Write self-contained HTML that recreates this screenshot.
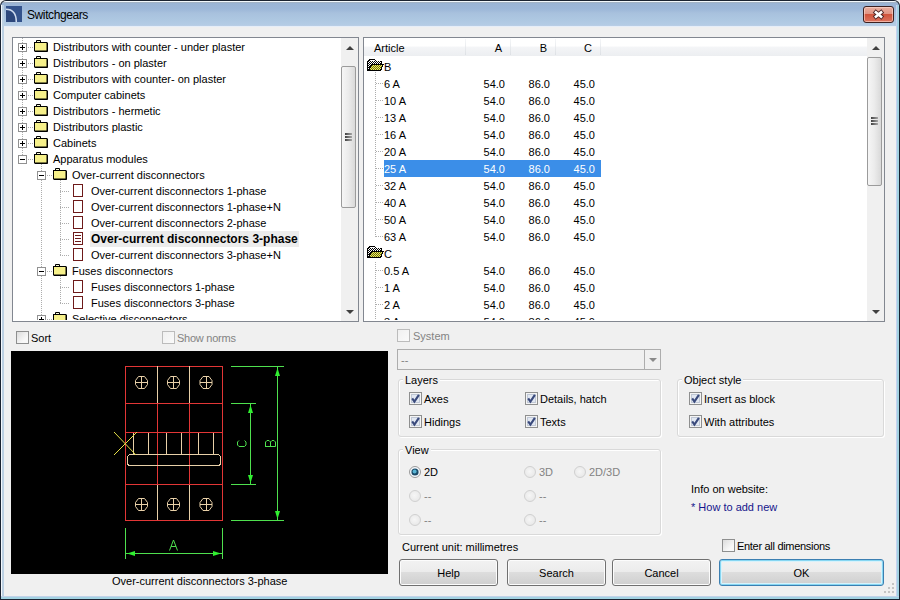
<!DOCTYPE html>
<html><head><meta charset="utf-8">
<style>
*{box-sizing:border-box}
html,body{margin:0;padding:0;width:900px;height:600px;overflow:hidden;background:#f0f0f0;font-family:"Liberation Sans",sans-serif;font-size:11px;color:#000}
.a{position:absolute}
.t{position:absolute;white-space:nowrap;line-height:16px}
/* window frame */
#outer{left:0;top:0;width:900px;height:600px;background:#1a2230;border-radius:6px 6px 0 0}
#frameL{left:1px;top:5px;width:3px;height:593px;background:linear-gradient(to right,#f4f8fc 0,#f4f8fc 1px,#bcd0e2 1px)}
#frameR{left:896px;top:5px;width:3px;height:593px;background:linear-gradient(to right,#c6d2f0 0,#c6d2f0 1px,#a2d2e2 1px)}
#frameB{left:1px;top:596px;width:898px;height:3px;background:linear-gradient(to bottom,#c2d2e8 0,#c2d2e8 1px,#a2d2e2 1px)}
#title{left:1px;top:1px;width:898px;height:26px;border-radius:5px 5px 0 0;
 background:linear-gradient(to bottom,#f2f8fc 0,#f2f8fc 1px,#a2b2c4 1px,#a2b2c4 2px,#9ab4d4 2px,#9cb7d8 8px,#a8c1dd 12px,#adc7e1 18px,#b4cce5 24px,#bccfe6 25px,#e6eef8 25px)}
#client{left:4px;top:27px;width:892px;height:569px;background:#f0f0f0}
#ttl{left:27px;top:7px;font-size:12px;letter-spacing:-0.4px;line-height:16px;color:#000}
#close{left:863px;top:6px;width:31px;height:17px;border:1px solid #3c2020;border-radius:3px;
 background:linear-gradient(to bottom,#eab0a0 0,#e09484 45%,#d0543c 50%,#dc7460 100%);box-shadow:inset 0 0 0 1px rgba(255,220,210,.6)}
/* boxes */
.box{position:absolute;background:#fff;border:1px solid #828790}
.sb{position:absolute;background:#f0f0f0;width:17px}
.thumb{position:absolute;left:0;width:15px;border:1px solid #9b9b9b;border-radius:2px;background:linear-gradient(to right,#f6f6f6,#ebebeb 50%,#d9d9d9)}
.grip{position:absolute;left:4px;width:7px;height:2px;background:linear-gradient(to right,#404040,#a8a8a8)}
.arr{position:absolute;width:0;height:0;border-left:4px solid transparent;border-right:4px solid transparent}
/* tree */
.exp{position:absolute;width:9px;height:9px;border:1px solid #919191;background:#fff}
.exp:before{content:"";position:absolute;left:1px;top:3px;width:5px;height:1px;background:#000}
.exp.p:after{content:"";position:absolute;left:3px;top:1px;width:1px;height:5px;background:#000}
.fold{position:absolute;width:14px;height:12px}
.doc{position:absolute;width:10px;height:13px;border:1px solid #6e1a1a;background:#fff}
.dv{position:absolute;width:1px;background:repeating-linear-gradient(to bottom,#adadad 0,#adadad 1px,transparent 1px,transparent 2px)}
.dh{position:absolute;height:1px;background:repeating-linear-gradient(to right,#adadad 0,#adadad 1px,transparent 1px,transparent 2px)}
/* controls */
.cb{position:absolute;width:13px;height:13px;border:1px solid #8e8f8f;background:linear-gradient(135deg,#dcdcdc,#f8f8f8 70%)}
.cb.dis{border-color:#bcbcbc;background:linear-gradient(135deg,#f0f0f0,#fafafa)}
.grp{position:absolute;border:1px solid #d9d9d9;border-radius:3px;box-shadow:inset 1px 1px 0 #fff,1px 1px 0 #fff}
.gl{position:absolute;background:#f0f0f0;padding:0 2px;line-height:14px;white-space:nowrap}
.btn{position:absolute;height:27px;border:1px solid #707070;border-radius:3px;
 background:linear-gradient(to bottom,#f2f2f2 0,#ebebeb 50%,#dddddd 50%,#cfcfcf 100%);box-shadow:inset 0 0 0 1px #fcfcfc;text-align:center;line-height:26px;font-size:11px}
.gray{color:#838383}
.rad{position:absolute;width:12px;height:12px;border-radius:50%;border:1px solid #d0d0d0;background:radial-gradient(circle at 45% 45%,#f6f6f6,#e4e4e4)}
</style></head><body>
<div id="outer" class="a"></div>
<div id="title" class="a"></div>
<div id="frameL" class="a"></div>
<div id="frameR" class="a"></div>
<div id="frameB" class="a"></div>
<div id="client" class="a"></div>
<svg class="a" style="left:6px;top:6px" width="16" height="16" viewBox="0 0 16 16">
<rect x="0" y="0" width="16" height="16" fill="#34538c"/>
<path d="M0 4 Q9.5 4 9.5 16 H0 Z" fill="#2c477c"/>
<path d="M0 3.2 Q10.3 3.2 10.3 16" stroke="#d0dcee" stroke-width="1.5" fill="none"/>
</svg>
<div id="ttl" class="t">Switchgears</div>
<div id="close" class="a"></div>
<svg class="a" style="left:871px;top:8px" width="16" height="13" viewBox="0 0 16 13">
<path d="M3.2 3 L11.8 10 M11.8 3 L3.2 10" stroke="#4e2626" stroke-width="4.4" stroke-linecap="butt"/>
<path d="M3.9 3.6 L11.1 9.4 M11.1 3.6 L3.9 9.4" stroke="#fff" stroke-width="2.6" stroke-linecap="butt"/>
</svg>
<div class="box" style="left:12px;top:37px;width:347px;height:285px"></div>
<div class="a" style="left:13px;top:38px;width:328px;height:282px;overflow:hidden">
<div class="dv" style="left:9px;top:0px;height:121px"></div>
<div class="dv" style="left:28px;top:126px;height:160px"></div>
<div class="dv" style="left:47px;top:142px;height:76px"></div>
<div class="dv" style="left:47px;top:238px;height:28px"></div>
<div class="dh" style="left:15px;top:9px;width:5px"></div>
<div class="exp p" style="left:5px;top:5px"></div>
<svg class="a" style="left:21px;top:2px" width="15" height="13" viewBox="0 0 15 13"><path d="M2.5 2.5 V0.5 H6.5 V2.5" fill="#f8f8d8" stroke="#000" stroke-width="1"/><rect x="0.5" y="2.5" width="12.5" height="8.5" fill="#f6f08a" stroke="#000" stroke-width="1"/><path d="M1 11.5 H13.5 V3" stroke="#000" stroke-width="1" fill="none"/></svg>
<div class="t" style="left:40px;top:1px">Distributors with counter - under plaster</div>
<div class="dh" style="left:15px;top:25px;width:5px"></div>
<div class="exp p" style="left:5px;top:21px"></div>
<svg class="a" style="left:21px;top:18px" width="15" height="13" viewBox="0 0 15 13"><path d="M2.5 2.5 V0.5 H6.5 V2.5" fill="#f8f8d8" stroke="#000" stroke-width="1"/><rect x="0.5" y="2.5" width="12.5" height="8.5" fill="#f6f08a" stroke="#000" stroke-width="1"/><path d="M1 11.5 H13.5 V3" stroke="#000" stroke-width="1" fill="none"/></svg>
<div class="t" style="left:40px;top:17px">Distributors - on plaster</div>
<div class="dh" style="left:15px;top:41px;width:5px"></div>
<div class="exp p" style="left:5px;top:37px"></div>
<svg class="a" style="left:21px;top:34px" width="15" height="13" viewBox="0 0 15 13"><path d="M2.5 2.5 V0.5 H6.5 V2.5" fill="#f8f8d8" stroke="#000" stroke-width="1"/><rect x="0.5" y="2.5" width="12.5" height="8.5" fill="#f6f08a" stroke="#000" stroke-width="1"/><path d="M1 11.5 H13.5 V3" stroke="#000" stroke-width="1" fill="none"/></svg>
<div class="t" style="left:40px;top:33px">Distributors with counter- on plaster</div>
<div class="dh" style="left:15px;top:57px;width:5px"></div>
<div class="exp p" style="left:5px;top:53px"></div>
<svg class="a" style="left:21px;top:50px" width="15" height="13" viewBox="0 0 15 13"><path d="M2.5 2.5 V0.5 H6.5 V2.5" fill="#f8f8d8" stroke="#000" stroke-width="1"/><rect x="0.5" y="2.5" width="12.5" height="8.5" fill="#f6f08a" stroke="#000" stroke-width="1"/><path d="M1 11.5 H13.5 V3" stroke="#000" stroke-width="1" fill="none"/></svg>
<div class="t" style="left:40px;top:49px">Computer cabinets</div>
<div class="dh" style="left:15px;top:73px;width:5px"></div>
<div class="exp p" style="left:5px;top:69px"></div>
<svg class="a" style="left:21px;top:66px" width="15" height="13" viewBox="0 0 15 13"><path d="M2.5 2.5 V0.5 H6.5 V2.5" fill="#f8f8d8" stroke="#000" stroke-width="1"/><rect x="0.5" y="2.5" width="12.5" height="8.5" fill="#f6f08a" stroke="#000" stroke-width="1"/><path d="M1 11.5 H13.5 V3" stroke="#000" stroke-width="1" fill="none"/></svg>
<div class="t" style="left:40px;top:65px">Distributors - hermetic</div>
<div class="dh" style="left:15px;top:89px;width:5px"></div>
<div class="exp p" style="left:5px;top:85px"></div>
<svg class="a" style="left:21px;top:82px" width="15" height="13" viewBox="0 0 15 13"><path d="M2.5 2.5 V0.5 H6.5 V2.5" fill="#f8f8d8" stroke="#000" stroke-width="1"/><rect x="0.5" y="2.5" width="12.5" height="8.5" fill="#f6f08a" stroke="#000" stroke-width="1"/><path d="M1 11.5 H13.5 V3" stroke="#000" stroke-width="1" fill="none"/></svg>
<div class="t" style="left:40px;top:81px">Distributors plastic</div>
<div class="dh" style="left:15px;top:105px;width:5px"></div>
<div class="exp p" style="left:5px;top:101px"></div>
<svg class="a" style="left:21px;top:98px" width="15" height="13" viewBox="0 0 15 13"><path d="M2.5 2.5 V0.5 H6.5 V2.5" fill="#f8f8d8" stroke="#000" stroke-width="1"/><rect x="0.5" y="2.5" width="12.5" height="8.5" fill="#f6f08a" stroke="#000" stroke-width="1"/><path d="M1 11.5 H13.5 V3" stroke="#000" stroke-width="1" fill="none"/></svg>
<div class="t" style="left:40px;top:97px">Cabinets</div>
<div class="dh" style="left:15px;top:121px;width:5px"></div>
<div class="exp" style="left:5px;top:117px"></div>
<svg class="a" style="left:21px;top:114px" width="15" height="13" viewBox="0 0 15 13"><path d="M2.5 2.5 V0.5 H6.5 V2.5" fill="#f8f8d8" stroke="#000" stroke-width="1"/><rect x="0.5" y="2.5" width="12.5" height="8.5" fill="#f6f08a" stroke="#000" stroke-width="1"/><path d="M1 11.5 H13.5 V3" stroke="#000" stroke-width="1" fill="none"/></svg>
<div class="t" style="left:40px;top:113px">Apparatus modules</div>
<div class="dh" style="left:34px;top:137px;width:5px"></div>
<div class="exp" style="left:24px;top:133px"></div>
<svg class="a" style="left:40px;top:130px" width="15" height="13" viewBox="0 0 15 13"><path d="M2.5 2.5 V0.5 H6.5 V2.5" fill="#f8f8d8" stroke="#000" stroke-width="1"/><rect x="0.5" y="2.5" width="12.5" height="8.5" fill="#f6f08a" stroke="#000" stroke-width="1"/><path d="M1 11.5 H13.5 V3" stroke="#000" stroke-width="1" fill="none"/></svg>
<div class="t" style="left:59px;top:129px">Over-current disconnectors</div>
<div class="dh" style="left:47px;top:153px;width:10px"></div>
<div class="doc" style="left:60px;top:146px"></div>
<div class="t" style="left:78px;top:145px">Over-current disconnectors 1-phase</div>
<div class="dh" style="left:47px;top:169px;width:10px"></div>
<div class="doc" style="left:60px;top:162px"></div>
<div class="t" style="left:78px;top:161px">Over-current disconnectors 1-phase+N</div>
<div class="dh" style="left:47px;top:185px;width:10px"></div>
<div class="doc" style="left:60px;top:178px"></div>
<div class="t" style="left:78px;top:177px">Over-current disconnectors 2-phase</div>
<div class="dh" style="left:47px;top:201px;width:10px"></div>
<div class="doc" style="left:60px;top:194px"></div>
<div class="a" style="left:62px;top:197px;width:6px;height:1px;background:#6e1a1a"></div>
<div class="a" style="left:62px;top:200px;width:6px;height:1px;background:#6e1a1a"></div>
<div class="a" style="left:62px;top:203px;width:6px;height:1px;background:#6e1a1a"></div>
<div class="a" style="left:77px;top:193px;width:209px;height:16px;background:#ececec"></div>
<div class="t" style="left:78px;top:193px;font-weight:bold;font-size:12px">Over-current disconnectors 3-phase</div>
<div class="dh" style="left:47px;top:217px;width:10px"></div>
<div class="doc" style="left:60px;top:210px"></div>
<div class="t" style="left:78px;top:209px">Over-current disconnectors 3-phase+N</div>
<div class="dh" style="left:34px;top:233px;width:5px"></div>
<div class="exp" style="left:24px;top:229px"></div>
<svg class="a" style="left:40px;top:226px" width="15" height="13" viewBox="0 0 15 13"><path d="M2.5 2.5 V0.5 H6.5 V2.5" fill="#f8f8d8" stroke="#000" stroke-width="1"/><rect x="0.5" y="2.5" width="12.5" height="8.5" fill="#f6f08a" stroke="#000" stroke-width="1"/><path d="M1 11.5 H13.5 V3" stroke="#000" stroke-width="1" fill="none"/></svg>
<div class="t" style="left:59px;top:225px">Fuses disconnectors</div>
<div class="dh" style="left:47px;top:249px;width:10px"></div>
<div class="doc" style="left:60px;top:242px"></div>
<div class="t" style="left:78px;top:241px">Fuses disconnectors 1-phase</div>
<div class="dh" style="left:47px;top:265px;width:10px"></div>
<div class="doc" style="left:60px;top:258px"></div>
<div class="t" style="left:78px;top:257px">Fuses disconnectors 3-phase</div>
<div class="dh" style="left:34px;top:281px;width:5px"></div>
<div class="exp p" style="left:24px;top:277px"></div>
<svg class="a" style="left:40px;top:274px" width="15" height="13" viewBox="0 0 15 13"><path d="M2.5 2.5 V0.5 H6.5 V2.5" fill="#f8f8d8" stroke="#000" stroke-width="1"/><rect x="0.5" y="2.5" width="12.5" height="8.5" fill="#f6f08a" stroke="#000" stroke-width="1"/><path d="M1 11.5 H13.5 V3" stroke="#000" stroke-width="1" fill="none"/></svg>
<div class="t" style="left:59px;top:273px">Selective disconnectors</div>
</div>
<div class="sb" style="left:341px;top:38px;height:283px"></div><div class="arr" style="left:346px;top:46px;border-bottom:4px solid #404040"></div><div class="arr" style="left:346px;top:310px;border-top:4px solid #404040"></div><div class="thumb" style="left:341px;top:66px;height:142px"></div><div class="grip" style="left:345px;top:133px"></div><div class="grip" style="left:345px;top:136px"></div><div class="grip" style="left:345px;top:139px"></div>
<svg width="0" height="0" style="position:absolute"><defs><pattern id="dgw" width="2" height="2" patternUnits="userSpaceOnUse"><rect width="2" height="2" fill="#000"/><rect width="1" height="1" fill="#fff"/><rect x="1" y="1" width="1" height="1" fill="#fff"/></pattern><pattern id="dgy" width="2" height="2" patternUnits="userSpaceOnUse"><rect width="2" height="2" fill="#6c6c10"/><rect width="1" height="1" fill="#f0f060"/><rect x="1" y="1" width="1" height="1" fill="#f0f060"/></pattern></defs></svg>
<div class="box" style="left:363px;top:37px;width:522px;height:285px"></div>
<div class="a" style="left:364px;top:38px;width:503px;height:282px;overflow:hidden">
<div class="a" style="left:0;top:0;width:503px;height:18px;background:linear-gradient(to bottom,#ffffff 0,#ffffff 45%,#f4f5f7 50%,#eceef1 100%)"></div>
<div class="a" style="left:101px;top:1px;width:1px;height:16px;background:linear-gradient(to bottom,#f5f6f8,#dde0e4)"></div>
<div class="a" style="left:146px;top:1px;width:1px;height:16px;background:linear-gradient(to bottom,#f5f6f8,#dde0e4)"></div>
<div class="a" style="left:191px;top:1px;width:1px;height:16px;background:linear-gradient(to bottom,#f5f6f8,#dde0e4)"></div>
<div class="a" style="left:236px;top:1px;width:1px;height:16px;background:linear-gradient(to bottom,#f5f6f8,#dde0e4)"></div>
<div class="t" style="left:10px;top:2px;line-height:17px">Article</div>
<div class="t" style="left:98px;top:2px;width:40px;text-align:right;line-height:17px">A</div>
<div class="t" style="left:143px;top:2px;width:40px;text-align:right;line-height:17px">B</div>
<div class="t" style="left:188px;top:2px;width:40px;text-align:right;line-height:17px">C</div>
<svg class="a" style="left:3px;top:21px" width="17" height="13" viewBox="0 0 17 13" shape-rendering="crispEdges"><path d="M0 12 V2 L2 0 H7 L9 2 H15 V5 H14 V3 H8 L6 1 H2.5 L1 2.5 V12 Z" fill="#000"/><rect x="1" y="2" width="13" height="9" fill="url(#dgw)"/><path d="M1 2.5 L2.5 1 H6 L8 3 H14 V2 H8.5 L6.5 0.5" fill="url(#dgw)"/><path d="M1 12 L4 5 H17 L14 12 Z" fill="#000"/><path d="M2.6 11 L5 6 H15.5 L13.2 11 Z" fill="url(#dgy)"/></svg>
<div class="t" style="left:20px;top:21px;line-height:17px">B</div>
<div class="dh" style="left:12px;top:45px;width:7px"></div>
<div class="t" style="left:20px;top:38px;line-height:17px;">6 A</div>
<div class="t" style="left:101px;top:38px;width:40px;text-align:right;line-height:17px;">54.0</div>
<div class="t" style="left:146px;top:38px;width:40px;text-align:right;line-height:17px;">86.0</div>
<div class="t" style="left:191px;top:38px;width:40px;text-align:right;line-height:17px;">45.0</div>
<div class="dh" style="left:12px;top:62px;width:7px"></div>
<div class="t" style="left:20px;top:55px;line-height:17px;">10 A</div>
<div class="t" style="left:101px;top:55px;width:40px;text-align:right;line-height:17px;">54.0</div>
<div class="t" style="left:146px;top:55px;width:40px;text-align:right;line-height:17px;">86.0</div>
<div class="t" style="left:191px;top:55px;width:40px;text-align:right;line-height:17px;">45.0</div>
<div class="dh" style="left:12px;top:79px;width:7px"></div>
<div class="t" style="left:20px;top:72px;line-height:17px;">13 A</div>
<div class="t" style="left:101px;top:72px;width:40px;text-align:right;line-height:17px;">54.0</div>
<div class="t" style="left:146px;top:72px;width:40px;text-align:right;line-height:17px;">86.0</div>
<div class="t" style="left:191px;top:72px;width:40px;text-align:right;line-height:17px;">45.0</div>
<div class="dh" style="left:12px;top:96px;width:7px"></div>
<div class="t" style="left:20px;top:89px;line-height:17px;">16 A</div>
<div class="t" style="left:101px;top:89px;width:40px;text-align:right;line-height:17px;">54.0</div>
<div class="t" style="left:146px;top:89px;width:40px;text-align:right;line-height:17px;">86.0</div>
<div class="t" style="left:191px;top:89px;width:40px;text-align:right;line-height:17px;">45.0</div>
<div class="dh" style="left:12px;top:113px;width:7px"></div>
<div class="t" style="left:20px;top:106px;line-height:17px;">20 A</div>
<div class="t" style="left:101px;top:106px;width:40px;text-align:right;line-height:17px;">54.0</div>
<div class="t" style="left:146px;top:106px;width:40px;text-align:right;line-height:17px;">86.0</div>
<div class="t" style="left:191px;top:106px;width:40px;text-align:right;line-height:17px;">45.0</div>
<div class="a" style="left:20px;top:122px;width:217px;height:17px;background:#3b8ee8"></div>
<div class="dh" style="left:12px;top:130px;width:7px"></div>
<div class="t" style="left:20px;top:123px;line-height:17px;color:#fff;">25 A</div>
<div class="t" style="left:101px;top:123px;width:40px;text-align:right;line-height:17px;color:#fff;">54.0</div>
<div class="t" style="left:146px;top:123px;width:40px;text-align:right;line-height:17px;color:#fff;">86.0</div>
<div class="t" style="left:191px;top:123px;width:40px;text-align:right;line-height:17px;color:#fff;">45.0</div>
<div class="dh" style="left:12px;top:147px;width:7px"></div>
<div class="t" style="left:20px;top:140px;line-height:17px;">32 A</div>
<div class="t" style="left:101px;top:140px;width:40px;text-align:right;line-height:17px;">54.0</div>
<div class="t" style="left:146px;top:140px;width:40px;text-align:right;line-height:17px;">86.0</div>
<div class="t" style="left:191px;top:140px;width:40px;text-align:right;line-height:17px;">45.0</div>
<div class="dh" style="left:12px;top:164px;width:7px"></div>
<div class="t" style="left:20px;top:157px;line-height:17px;">40 A</div>
<div class="t" style="left:101px;top:157px;width:40px;text-align:right;line-height:17px;">54.0</div>
<div class="t" style="left:146px;top:157px;width:40px;text-align:right;line-height:17px;">86.0</div>
<div class="t" style="left:191px;top:157px;width:40px;text-align:right;line-height:17px;">45.0</div>
<div class="dh" style="left:12px;top:181px;width:7px"></div>
<div class="t" style="left:20px;top:174px;line-height:17px;">50 A</div>
<div class="t" style="left:101px;top:174px;width:40px;text-align:right;line-height:17px;">54.0</div>
<div class="t" style="left:146px;top:174px;width:40px;text-align:right;line-height:17px;">86.0</div>
<div class="t" style="left:191px;top:174px;width:40px;text-align:right;line-height:17px;">45.0</div>
<div class="dh" style="left:12px;top:198px;width:7px"></div>
<div class="t" style="left:20px;top:191px;line-height:17px;">63 A</div>
<div class="t" style="left:101px;top:191px;width:40px;text-align:right;line-height:17px;">54.0</div>
<div class="t" style="left:146px;top:191px;width:40px;text-align:right;line-height:17px;">86.0</div>
<div class="t" style="left:191px;top:191px;width:40px;text-align:right;line-height:17px;">45.0</div>
<svg class="a" style="left:3px;top:208px" width="17" height="13" viewBox="0 0 17 13" shape-rendering="crispEdges"><path d="M0 12 V2 L2 0 H7 L9 2 H15 V5 H14 V3 H8 L6 1 H2.5 L1 2.5 V12 Z" fill="#000"/><rect x="1" y="2" width="13" height="9" fill="url(#dgw)"/><path d="M1 2.5 L2.5 1 H6 L8 3 H14 V2 H8.5 L6.5 0.5" fill="url(#dgw)"/><path d="M1 12 L4 5 H17 L14 12 Z" fill="#000"/><path d="M2.6 11 L5 6 H15.5 L13.2 11 Z" fill="url(#dgy)"/></svg>
<div class="t" style="left:20px;top:208px;line-height:17px">C</div>
<div class="dh" style="left:12px;top:232px;width:7px"></div>
<div class="t" style="left:20px;top:225px;line-height:17px;">0.5 A</div>
<div class="t" style="left:101px;top:225px;width:40px;text-align:right;line-height:17px;">54.0</div>
<div class="t" style="left:146px;top:225px;width:40px;text-align:right;line-height:17px;">86.0</div>
<div class="t" style="left:191px;top:225px;width:40px;text-align:right;line-height:17px;">45.0</div>
<div class="dh" style="left:12px;top:249px;width:7px"></div>
<div class="t" style="left:20px;top:242px;line-height:17px;">1 A</div>
<div class="t" style="left:101px;top:242px;width:40px;text-align:right;line-height:17px;">54.0</div>
<div class="t" style="left:146px;top:242px;width:40px;text-align:right;line-height:17px;">86.0</div>
<div class="t" style="left:191px;top:242px;width:40px;text-align:right;line-height:17px;">45.0</div>
<div class="dh" style="left:12px;top:266px;width:7px"></div>
<div class="t" style="left:20px;top:259px;line-height:17px;">2 A</div>
<div class="t" style="left:101px;top:259px;width:40px;text-align:right;line-height:17px;">54.0</div>
<div class="t" style="left:146px;top:259px;width:40px;text-align:right;line-height:17px;">86.0</div>
<div class="t" style="left:191px;top:259px;width:40px;text-align:right;line-height:17px;">45.0</div>
<div class="dh" style="left:12px;top:283px;width:7px"></div>
<div class="t" style="left:20px;top:276px;line-height:17px;">3 A</div>
<div class="t" style="left:101px;top:276px;width:40px;text-align:right;line-height:17px;">54.0</div>
<div class="t" style="left:146px;top:276px;width:40px;text-align:right;line-height:17px;">86.0</div>
<div class="t" style="left:191px;top:276px;width:40px;text-align:right;line-height:17px;">45.0</div>
<div class="dv" style="left:11px;top:34px;height:166px"></div>
<div class="dv" style="left:11px;top:224px;height:80px"></div>
</div>
<div class="sb" style="left:867px;top:38px;height:283px"></div><div class="arr" style="left:872px;top:46px;border-bottom:4px solid #404040"></div><div class="arr" style="left:872px;top:310px;border-top:4px solid #404040"></div><div class="thumb" style="left:867px;top:57px;height:129px"></div><div class="grip" style="left:871px;top:117px"></div><div class="grip" style="left:871px;top:120px"></div><div class="grip" style="left:871px;top:123px"></div>
<div class="cb" style="left:16px;top:331px"></div><div class="t" style="left:31px;top:330px;font-size:11px">Sort</div>
<div class="cb dis" style="left:162px;top:331px"></div><div class="t gray" style="left:177px;top:330px;letter-spacing:-0.25px">Show norms</div>
<div class="a" style="left:11px;top:351px;width:377px;height:223px;background:#000"></div>
<svg class="a" style="left:11px;top:351px" width="377" height="223" viewBox="11 351 377 223" shape-rendering="crispEdges"><line x1="125" y1="366.5" x2="223" y2="366.5" stroke="#e23636" stroke-width="1"/><line x1="125" y1="403.5" x2="223" y2="403.5" stroke="#e23636" stroke-width="1"/><line x1="125" y1="432.5" x2="223" y2="432.5" stroke="#e23636" stroke-width="1"/><line x1="125" y1="484.5" x2="223" y2="484.5" stroke="#e23636" stroke-width="1"/><line x1="125" y1="520.5" x2="223" y2="520.5" stroke="#e23636" stroke-width="1"/><line x1="125.5" y1="366" x2="125.5" y2="521" stroke="#e23636" stroke-width="1"/><line x1="222.5" y1="366" x2="222.5" y2="521" stroke="#e23636" stroke-width="1"/><line x1="157.5" y1="366" x2="157.5" y2="403" stroke="#e8d0a8" stroke-width="1"/><line x1="189.5" y1="366" x2="189.5" y2="403" stroke="#e8d0a8" stroke-width="1"/><line x1="157.5" y1="403" x2="157.5" y2="485" stroke="#e23636" stroke-width="1"/><line x1="189.5" y1="403" x2="189.5" y2="485" stroke="#e23636" stroke-width="1"/><line x1="157.5" y1="485" x2="157.5" y2="520" stroke="#e8d0a8" stroke-width="1"/><line x1="189.5" y1="485" x2="189.5" y2="520" stroke="#e8d0a8" stroke-width="1"/><line x1="133.5" y1="433" x2="133.5" y2="454" stroke="#e8d0a8" stroke-width="1"/><line x1="148.5" y1="433" x2="148.5" y2="454" stroke="#e8d0a8" stroke-width="1"/><line x1="166.5" y1="433" x2="166.5" y2="454" stroke="#e8d0a8" stroke-width="1"/><line x1="181.5" y1="433" x2="181.5" y2="454" stroke="#e8d0a8" stroke-width="1"/><line x1="198.5" y1="433" x2="198.5" y2="454" stroke="#e8d0a8" stroke-width="1"/><line x1="213.5" y1="433" x2="213.5" y2="454" stroke="#e8d0a8" stroke-width="1"/><rect x="127.5" y="454.5" width="93" height="11" rx="3" fill="none" stroke="#e8d0a8" stroke-width="1"/><path d="M114 432 L136 455 M114 455 L137 432" stroke="#e6e048" stroke-width="1" fill="none" shape-rendering="auto"/><g shape-rendering="auto"><path d="M138.5 376.5 H144.5 L147.5 380.5 V384.5 L144.5 388.5 H138.5 L135.5 384.5 V380.5 Z" fill="none" stroke="#e8d0a8" stroke-width="1"/></g><line x1="135.5" y1="382.5" x2="147.5" y2="382.5" stroke="#e8d0a8" stroke-width="1"/><line x1="141.5" y1="376.5" x2="141.5" y2="388.5" stroke="#e8d0a8" stroke-width="1"/><g shape-rendering="auto"><path d="M138.5 498.5 H144.5 L147.5 502.5 V506.5 L144.5 510.5 H138.5 L135.5 506.5 V502.5 Z" fill="none" stroke="#e8d0a8" stroke-width="1"/></g><line x1="135.5" y1="504.5" x2="147.5" y2="504.5" stroke="#e8d0a8" stroke-width="1"/><line x1="141.5" y1="498.5" x2="141.5" y2="510.5" stroke="#e8d0a8" stroke-width="1"/><g shape-rendering="auto"><path d="M170.5 376.5 H176.5 L179.5 380.5 V384.5 L176.5 388.5 H170.5 L167.5 384.5 V380.5 Z" fill="none" stroke="#e8d0a8" stroke-width="1"/></g><line x1="167.5" y1="382.5" x2="179.5" y2="382.5" stroke="#e8d0a8" stroke-width="1"/><line x1="173.5" y1="376.5" x2="173.5" y2="388.5" stroke="#e8d0a8" stroke-width="1"/><g shape-rendering="auto"><path d="M170.5 498.5 H176.5 L179.5 502.5 V506.5 L176.5 510.5 H170.5 L167.5 506.5 V502.5 Z" fill="none" stroke="#e8d0a8" stroke-width="1"/></g><line x1="167.5" y1="504.5" x2="179.5" y2="504.5" stroke="#e8d0a8" stroke-width="1"/><line x1="173.5" y1="498.5" x2="173.5" y2="510.5" stroke="#e8d0a8" stroke-width="1"/><g shape-rendering="auto"><path d="M203 376.5 H209 L212 380.5 V384.5 L209 388.5 H203 L200 384.5 V380.5 Z" fill="none" stroke="#e8d0a8" stroke-width="1"/></g><line x1="200" y1="382.5" x2="212" y2="382.5" stroke="#e8d0a8" stroke-width="1"/><line x1="206" y1="376.5" x2="206" y2="388.5" stroke="#e8d0a8" stroke-width="1"/><g shape-rendering="auto"><path d="M203 498.5 H209 L212 502.5 V506.5 L209 510.5 H203 L200 506.5 V502.5 Z" fill="none" stroke="#e8d0a8" stroke-width="1"/></g><line x1="200" y1="504.5" x2="212" y2="504.5" stroke="#e8d0a8" stroke-width="1"/><line x1="206" y1="498.5" x2="206" y2="510.5" stroke="#e8d0a8" stroke-width="1"/><line x1="231" y1="366.5" x2="284" y2="366.5" stroke="#4ee04e" stroke-width="1"/><line x1="231" y1="520.5" x2="284" y2="520.5" stroke="#4ee04e" stroke-width="1"/><line x1="277.5" y1="367" x2="277.5" y2="520" stroke="#4ee04e" stroke-width="1"/><line x1="231" y1="403.5" x2="256" y2="403.5" stroke="#4ee04e" stroke-width="1"/><line x1="231" y1="484.5" x2="256" y2="484.5" stroke="#4ee04e" stroke-width="1"/><line x1="250.5" y1="404" x2="250.5" y2="484" stroke="#4ee04e" stroke-width="1"/><line x1="125.5" y1="528" x2="125.5" y2="559" stroke="#4ee04e" stroke-width="1"/><line x1="222.5" y1="528" x2="222.5" y2="559" stroke="#4ee04e" stroke-width="1"/><line x1="126" y1="553.5" x2="222" y2="553.5" stroke="#4ee04e" stroke-width="1"/><path d="M277.5 368 L275.0 376 L280.0 376 Z" fill="#30f030" shape-rendering="auto"/><path d="M277.5 519 L275.0 511 L280.0 511 Z" fill="#30f030" shape-rendering="auto"/><path d="M250.5 405 L248.0 413 L253.0 413 Z" fill="#30f030" shape-rendering="auto"/><path d="M250.5 483 L248.0 475 L253.0 475 Z" fill="#30f030" shape-rendering="auto"/><path d="M127 553.5 L135 551.0 L135 556.0 Z" fill="#30f030" shape-rendering="auto"/><path d="M221 553.5 L213 551.0 L213 556.0 Z" fill="#30f030" shape-rendering="auto"/><path d="M169.5 550.5 L173.5 540 L177.5 550.5 M171 546.5 H176" stroke="#4ee04e" stroke-width="1" fill="none" shape-rendering="auto"/><path d="M239 440.5 L237.5 442 V445 L239 446.5 H244.5 L246 445 V442 L244.5 440.5" stroke="#4ee04e" stroke-width="1" fill="none" shape-rendering="auto"/><path d="M265 446.5 H275.5 M265.5 446.5 V442 L267 440.5 H269 L270.5 442 V446.5 M270.5 442 L272 440.5 H274 L275.5 442 V446.5" stroke="#4ee04e" stroke-width="1" fill="none" shape-rendering="auto"/></svg>
<div class="t" style="left:112px;top:573px">Over-current disconnectors 3-phase</div>
<div class="cb dis" style="left:397px;top:329px"></div><div class="t gray" style="left:413px;top:328px">System</div>
<div class="a" style="left:397px;top:349px;width:264px;height:21px;border:1px solid #adadad;background:#f0f0f0"></div>
<div class="a" style="left:644px;top:350px;width:1px;height:19px;background:#adadad"></div>
<div class="arr" style="left:649px;top:358px;border-top:4px solid #8a8a8a"></div>
<div class="t gray" style="left:401px;top:352px">--</div>
<div class="grp" style="left:398px;top:379px;width:263px;height:58px"></div><div class="gl" style="left:403px;top:373px">Layers</div>
<svg class="a" style="left:409px;top:392px" width="13" height="13" viewBox="0 0 13 13"><rect x="0.5" y="0.5" width="12" height="12" fill="#f4f4f4" stroke="#8e8f8f"/><rect x="2.5" y="2.5" width="8" height="8" fill="#e2e8f2" stroke="#c0c8d6"/><path d="M3.2 6.3 L5.4 9.6 L9.9 2.8" stroke="#3a4a7c" stroke-width="2.1" fill="none"/></svg>
<div class="t" style="left:424px;top:391px">Axes</div>
<svg class="a" style="left:525px;top:392px" width="13" height="13" viewBox="0 0 13 13"><rect x="0.5" y="0.5" width="12" height="12" fill="#f4f4f4" stroke="#8e8f8f"/><rect x="2.5" y="2.5" width="8" height="8" fill="#e2e8f2" stroke="#c0c8d6"/><path d="M3.2 6.3 L5.4 9.6 L9.9 2.8" stroke="#3a4a7c" stroke-width="2.1" fill="none"/></svg>
<div class="t" style="left:540px;top:391px">Details, hatch</div>
<svg class="a" style="left:409px;top:415px" width="13" height="13" viewBox="0 0 13 13"><rect x="0.5" y="0.5" width="12" height="12" fill="#f4f4f4" stroke="#8e8f8f"/><rect x="2.5" y="2.5" width="8" height="8" fill="#e2e8f2" stroke="#c0c8d6"/><path d="M3.2 6.3 L5.4 9.6 L9.9 2.8" stroke="#3a4a7c" stroke-width="2.1" fill="none"/></svg>
<div class="t" style="left:424px;top:414px">Hidings</div>
<svg class="a" style="left:525px;top:415px" width="13" height="13" viewBox="0 0 13 13"><rect x="0.5" y="0.5" width="12" height="12" fill="#f4f4f4" stroke="#8e8f8f"/><rect x="2.5" y="2.5" width="8" height="8" fill="#e2e8f2" stroke="#c0c8d6"/><path d="M3.2 6.3 L5.4 9.6 L9.9 2.8" stroke="#3a4a7c" stroke-width="2.1" fill="none"/></svg>
<div class="t" style="left:540px;top:414px">Texts</div>
<div class="grp" style="left:398px;top:449px;width:263px;height:86px"></div><div class="gl" style="left:403px;top:443px">View</div>
<svg class="a" style="left:409px;top:466px" width="12" height="12" viewBox="0 0 12 12"><circle cx="6" cy="6" r="5.5" fill="#f4f8fc" stroke="#9a9a9a"/><circle cx="6" cy="6" r="3.6" fill="#1a4a68"/><circle cx="5.6" cy="5.6" r="2" fill="#58b4d4"/></svg>
<div class="t" style="left:424px;top:464px">2D</div>
<div class="rad" style="left:524px;top:466px"></div><div class="t gray" style="left:539px;top:464px">3D</div>
<div class="rad" style="left:574px;top:466px"></div><div class="t gray" style="left:589px;top:464px">2D/3D</div>
<div class="rad" style="left:409px;top:490px"></div><div class="t gray" style="left:424px;top:488px">--</div>
<div class="rad" style="left:524px;top:490px"></div><div class="t gray" style="left:539px;top:488px">--</div>
<div class="rad" style="left:409px;top:514px"></div><div class="t gray" style="left:424px;top:512px">--</div>
<div class="rad" style="left:524px;top:514px"></div><div class="t gray" style="left:539px;top:512px">--</div>
<div class="grp" style="left:677px;top:379px;width:207px;height:58px"></div><div class="gl" style="left:682px;top:373px">Object style</div>
<svg class="a" style="left:689px;top:392px" width="13" height="13" viewBox="0 0 13 13"><rect x="0.5" y="0.5" width="12" height="12" fill="#f4f4f4" stroke="#8e8f8f"/><rect x="2.5" y="2.5" width="8" height="8" fill="#e2e8f2" stroke="#c0c8d6"/><path d="M3.2 6.3 L5.4 9.6 L9.9 2.8" stroke="#3a4a7c" stroke-width="2.1" fill="none"/></svg>
<div class="t" style="left:704px;top:391px">Insert as block</div>
<svg class="a" style="left:689px;top:415px" width="13" height="13" viewBox="0 0 13 13"><rect x="0.5" y="0.5" width="12" height="12" fill="#f4f4f4" stroke="#8e8f8f"/><rect x="2.5" y="2.5" width="8" height="8" fill="#e2e8f2" stroke="#c0c8d6"/><path d="M3.2 6.3 L5.4 9.6 L9.9 2.8" stroke="#3a4a7c" stroke-width="2.1" fill="none"/></svg>
<div class="t" style="left:704px;top:414px">With attributes</div>
<div class="t" style="left:691px;top:481px">Info on website:</div>
<div class="t" style="left:691px;top:499px;color:#16168c">* How to add new</div>
<div class="t" style="left:402px;top:539px">Current unit: millimetres</div>
<div class="cb" style="left:722px;top:539px"></div><div class="t" style="left:737px;top:538px;letter-spacing:-0.3px">Enter all dimensions</div>
<div class="btn" style="left:399px;top:559px;width:99px">Help</div>
<div class="btn" style="left:507px;top:559px;width:99px">Search</div>
<div class="btn" style="left:612px;top:559px;width:99px">Cancel</div>
<div class="btn" style="left:719px;top:559px;width:165px;border-color:#3c7fb1;box-shadow:inset 0 0 0 1px #86d6f2,inset 0 0 0 2px #d8f2fb">OK</div>
<div class="a" style="left:892px;top:587px;width:2px;height:2px;background:#c4c4c4"></div>
<div class="a" style="left:892px;top:591px;width:2px;height:2px;background:#c4c4c4"></div>
<div class="a" style="left:888px;top:591px;width:2px;height:2px;background:#c4c4c4"></div>
<div class="a" style="left:892px;top:583px;width:2px;height:2px;background:#c4c4c4"></div>
<div class="a" style="left:888px;top:587px;width:2px;height:2px;background:#c4c4c4"></div>
<div class="a" style="left:884px;top:591px;width:2px;height:2px;background:#c4c4c4"></div>
</body></html>
